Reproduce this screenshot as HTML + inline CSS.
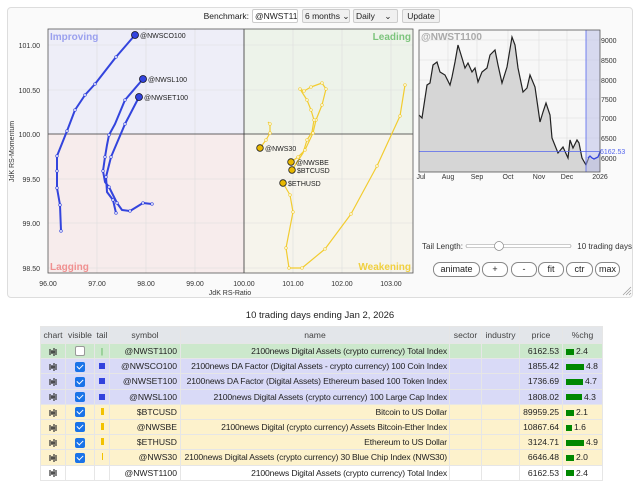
<!DOCTYPE html>
<html><head><meta charset="utf-8"><style>
*{box-sizing:border-box;margin:0;padding:0}
body{width:640px;height:484px;background:#fff;font-family:"Liberation Sans",Arial,sans-serif;position:relative;overflow:hidden;color:#222}
.abs{position:absolute}
#panel{left:7px;top:7px;width:626px;height:291px;border:1px solid #ddd;border-radius:4px;background:#fafafa}
.ctl{position:absolute;height:14px;top:9px;border:1px solid #ccc;border-radius:2px;background:#f0f0f0;font-size:8.5px;line-height:12px;padding-left:2px;overflow:hidden;white-space:nowrap}
.btn{position:absolute;top:262px;height:15px;border:1px solid #888;border-radius:7px;background:#fff;font-size:9px;line-height:13px;text-align:center}
table{position:absolute;left:40px;top:326px;width:562px;border-collapse:collapse;font-size:8.6px;table-layout:fixed}
td,th{border:1px solid #e6e6e6;height:15.2px;padding:0 3px;white-space:nowrap;overflow:hidden}
th{background:#e3e6ea;font-weight:normal;color:#444;height:17px;padding:0}
.g td{background:#cce8cc}.b td{background:#d9daf7}.y td{background:#fdf2cc}
.r{text-align:right}.c{text-align:center;padding:0}
.n{letter-spacing:-0.15px;padding-right:2px}
.cb{display:inline-block;width:10px;height:10px;border-radius:2px;background:#1a73e8;vertical-align:middle;position:relative}
.cb:after{content:"";position:absolute;left:3px;top:1px;width:3px;height:5px;border:solid #fff;border-width:0 1.5px 1.5px 0;transform:rotate(45deg)}
.bar{display:inline-block;height:6px;background:#080;vertical-align:middle;margin-right:2px}
.ic{vertical-align:middle}
</style></head><body>
<div id="panel" class="abs"></div>
<div class="abs" style="left:196px;width:53px;text-align:right;top:11px;font-size:8.5px">Benchmark:</div>
<div class="ctl" style="left:252px;width:46px;background:#fff">@NWST1100</div>
<div class="ctl" style="left:302px;width:48px">6 months ⌄</div>
<div class="ctl" style="left:353px;width:45px">Daily&nbsp;&nbsp;&nbsp;&nbsp;⌄</div>
<div class="ctl" style="left:402px;width:38px;text-align:center;padding:0">Update</div>

<svg class="abs" style="left:0;top:0" width="640" height="300" font-family="Liberation Sans,Arial,sans-serif">
<rect x="48" y="29" width="196" height="105" fill="#eeeef8"/>
<rect x="244" y="29" width="169" height="105" fill="#edf3ea"/>
<rect x="48" y="134" width="196" height="139" fill="#f7ecec"/>
<rect x="244" y="134" width="169" height="139" fill="#f6f4ec"/>
<g stroke="#ddd" stroke-width="0.6">
<line x1="97" y1="29" x2="97" y2="273"/><line x1="146" y1="29" x2="146" y2="273"/><line x1="195" y1="29" x2="195" y2="273"/><line x1="293" y1="29" x2="293" y2="273"/><line x1="342" y1="29" x2="342" y2="273"/><line x1="391" y1="29" x2="391" y2="273"/>
<line x1="48" y1="45" x2="413" y2="45"/><line x1="48" y1="90" x2="413" y2="90"/><line x1="48" y1="179" x2="413" y2="179"/><line x1="48" y1="223" x2="413" y2="223"/><line x1="48" y1="268" x2="413" y2="268"/>
</g>
<line x1="244" y1="29" x2="244" y2="273" stroke="#333" stroke-width="0.8"/>
<line x1="48" y1="134" x2="413" y2="134" stroke="#333" stroke-width="0.8"/>
<rect x="48" y="29" width="365" height="244" fill="none" stroke="#555" stroke-width="0.8"/>
<g font-size="10" font-weight="bold">
<text x="50" y="40" fill="#9aa0ee">Improving</text>
<text x="411" y="40" fill="#7cc47c" text-anchor="end">Leading</text>
<text x="50" y="270" fill="#f09090">Lagging</text>
<text x="411" y="270" fill="#f0d040" text-anchor="end">Weakening</text>
</g>
<g font-size="7" fill="#333" text-anchor="end">
<text x="40" y="48">101.00</text><text x="40" y="93">100.50</text><text x="40" y="137">100.00</text><text x="40" y="182">99.50</text><text x="40" y="226">99.00</text><text x="40" y="271">98.50</text>
</g>
<g font-size="7" fill="#333" text-anchor="middle">
<text x="48" y="286">96.00</text><text x="97" y="286">97.00</text><text x="146" y="286">98.00</text><text x="195" y="286">99.00</text><text x="244" y="286">100.00</text><text x="293" y="286">101.00</text><text x="342" y="286">102.00</text><text x="391" y="286">103.00</text>
<text x="230" y="295">JdK RS-Ratio</text>
</g>
<text x="0" y="0" font-size="7" fill="#333" transform="translate(14,182) rotate(-90)">JdK RS-Momentum</text>
<g fill="none" stroke="#3344dd" stroke-width="2" stroke-linejoin="round">
<polyline points="135,35 116,57 95,84 85,95 75,110 67,131 57,156 57,171 57,188 60,205 61,231"/>
<polyline points="143,79 125,100 115,124 109,135 107,145 105,157 103,171 105,182 109,187 117,203 122,210 130,211 143,203 152,204"/>
<polyline points="139,97 125,124 111,157 106,177 107,192 113,200 116,213"/>
</g>
<g fill="#fff" stroke="#3344dd" stroke-width="0.7">
<circle cx="116" cy="57" r="1.3"/><circle cx="95" cy="84" r="1.3"/><circle cx="85" cy="95" r="1.3"/><circle cx="75" cy="110" r="1.3"/><circle cx="67" cy="131" r="1.3"/><circle cx="57" cy="156" r="1.3"/><circle cx="57" cy="171" r="1.3"/><circle cx="57" cy="188" r="1.3"/><circle cx="60" cy="205" r="1.3"/><circle cx="61" cy="231" r="1.3"/>
<circle cx="125" cy="100" r="1.3"/><circle cx="109" cy="135" r="1.3"/><circle cx="105" cy="157" r="1.3"/><circle cx="103" cy="171" r="1.3"/><circle cx="109" cy="187" r="1.3"/><circle cx="117" cy="203" r="1.3"/><circle cx="130" cy="211" r="1.3"/><circle cx="143" cy="203" r="1.3"/><circle cx="152" cy="204" r="1.3"/>
<circle cx="125" cy="124" r="1.3"/><circle cx="111" cy="157" r="1.3"/><circle cx="106" cy="177" r="1.3"/><circle cx="113" cy="200" r="1.3"/><circle cx="116" cy="213" r="1.3"/>
</g>
<g fill="#3344dd" stroke="#112" stroke-width="0.8">
<circle cx="135" cy="35" r="3.5"/><circle cx="143" cy="79" r="3.5"/><circle cx="139" cy="97" r="3.5"/>
</g>
<g fill="none" stroke="#f2cc30" stroke-width="1.2" stroke-linejoin="round">
<polyline points="260,148 266,140 270,133 270,124 268,122"/>
<polyline points="291,162 298,157 305,150 313,133 316,120 322,105 326,89 322,83 311,87 304,91 300,89 307,100 311,110 314,120 312,132 307,140 303,153 292,170"/>
<polyline points="283,183 290,195 293,212 286,248 289,268 302,268 325,249 351,214 377,166 400,116 405,85"/>
</g>
<g fill="#fff" stroke="#f2cc30" stroke-width="0.7">
<circle cx="266" cy="140" r="1.3"/><circle cx="270" cy="133" r="1.3"/><circle cx="270" cy="124" r="1.3"/>
<circle cx="298" cy="157" r="1.3"/><circle cx="305" cy="150" r="1.3"/><circle cx="313" cy="133" r="1.3"/><circle cx="316" cy="120" r="1.3"/><circle cx="322" cy="105" r="1.3"/><circle cx="326" cy="89" r="1.3"/><circle cx="322" cy="83" r="1.3"/><circle cx="311" cy="87" r="1.3"/><circle cx="304" cy="91" r="1.3"/><circle cx="300" cy="89" r="1.3"/><circle cx="307" cy="100" r="1.3"/><circle cx="311" cy="110" r="1.3"/><circle cx="314" cy="120" r="1.3"/><circle cx="307" cy="140" r="1.3"/>
<circle cx="290" cy="195" r="1.3"/><circle cx="293" cy="212" r="1.3"/><circle cx="286" cy="248" r="1.3"/><circle cx="289" cy="268" r="1.3"/><circle cx="302" cy="268" r="1.3"/><circle cx="325" cy="249" r="1.3"/><circle cx="351" cy="214" r="1.3"/><circle cx="377" cy="166" r="1.3"/><circle cx="400" cy="116" r="1.3"/><circle cx="405" cy="85" r="1.3"/>
</g>
<g fill="#e8b800" stroke="#222" stroke-width="0.8">
<circle cx="260" cy="148" r="3.3"/><circle cx="291" cy="162" r="3.3"/><circle cx="292" cy="170" r="3.3"/><circle cx="283" cy="183" r="3.3"/>
</g>
<g font-size="7" fill="#222">
<text x="140" y="38">@NWSCO100</text><text x="148" y="82">@NWSL100</text><text x="144" y="100">@NWSET100</text>
<text x="265" y="151">@NWS30</text><text x="296" y="165">@NWSBE</text><text x="297" y="173">$BTCUSD</text><text x="288" y="186">$ETHUSD</text>
</g>

<rect x="419" y="30" width="181" height="142" fill="#f7f7f7"/>
<g stroke="#ddd" stroke-width="0.6">
<line x1="448" y1="30" x2="448" y2="172"/><line x1="477" y1="30" x2="477" y2="172"/><line x1="508" y1="30" x2="508" y2="172"/><line x1="539" y1="30" x2="539" y2="172"/><line x1="567" y1="30" x2="567" y2="172"/>
<line x1="419" y1="40" x2="600" y2="40"/><line x1="419" y1="60" x2="600" y2="60"/><line x1="419" y1="80" x2="600" y2="80"/><line x1="419" y1="99" x2="600" y2="99"/><line x1="419" y1="118" x2="600" y2="118"/><line x1="419" y1="138" x2="600" y2="138"/><line x1="419" y1="158" x2="600" y2="158"/>
</g>
<polygon fill="#d6d6d6" points="419,115 422,118 427,85 430,83 433,65 437,62 440,72 445,75 450,85 452,77 455,62 458,45 462,58 465,68 468,63 472,72 475,68 478,82 482,72 487,68 490,55 495,50 498,65 502,83 507,67 512,37 515,45 518,68 523,92 527,88 530,75 535,87 540,122 543,112 546,103 550,115 552,138 558,153 563,147 568,158 570,140 573,148 577,140 579,143 582,158 586,165 589,157 592,160 598,157 600,152 600,172 419,172"/>
<polyline fill="none" stroke="#222" stroke-width="1.2" points="419,115 422,118 427,85 430,83 433,65 437,62 440,72 445,75 450,85 452,77 455,62 458,45 462,58 465,68 468,63 472,72 475,68 478,82 482,72 487,68 490,55 495,50 498,65 502,83 507,67 512,37 515,45 518,68 523,92 527,88 530,75 535,87 540,122 543,112 546,103 550,115 552,138 558,153 563,147 568,158 570,140 573,148 577,140 579,143 582,158 586,165 589,157"/>
<rect x="586" y="30" width="14" height="142" fill="#b8bce8" opacity="0.5"/>
<polyline fill="none" stroke="#3344dd" stroke-width="1.3" points="588,158 590,156 592,158 594,159 596,158 598,157 600,152"/>
<line x1="586" y1="30" x2="586" y2="172" stroke="#5566ee" stroke-width="0.8"/>
<line x1="419" y1="151.5" x2="600" y2="151.5" stroke="#5566ee" stroke-width="0.8"/>
<rect x="419" y="30" width="181" height="142" fill="none" stroke="#555" stroke-width="0.8"/>
<text x="421" y="40" font-size="10" font-weight="bold" fill="#aaa">@NWST1100</text>
<g font-size="7" fill="#333">
<text x="601" y="43">9000</text><text x="601" y="63">8500</text><text x="601" y="83">8000</text><text x="601" y="102">7500</text><text x="601" y="121">7000</text><text x="601" y="141">6500</text><text x="601" y="161">6000</text>
<text x="600" y="154" fill="#5566ee">6162.53</text>
</g>
<g font-size="7" fill="#333" text-anchor="middle">
<text x="421" y="179">Jul</text><text x="448" y="179">Aug</text><text x="477" y="179">Sep</text><text x="508" y="179">Oct</text><text x="539" y="179">Nov</text><text x="567" y="179">Dec</text><text x="600" y="179">2026</text>
</g>
<text x="422" y="249" font-size="8" fill="#333">Tail Length:</text>
<rect x="466" y="244.5" width="105" height="3" rx="1.5" fill="#fff" stroke="#999" stroke-width="0.6"/>
<circle cx="499" cy="246" r="4.5" fill="#fff" stroke="#888" stroke-width="0.7"/>
<text x="632" y="249" font-size="8" fill="#333" text-anchor="end">10 trading days</text>
<g stroke="#999" stroke-width="0.7"><line x1="623" y1="295" x2="631" y2="287"/><line x1="626" y1="295" x2="631" y2="290"/><line x1="629" y1="295" x2="631" y2="293"/></g>
</svg>
<div class="btn" style="left:433px;width:47px">animate</div>
<div class="btn" style="left:482px;width:26px">+</div>
<div class="btn" style="left:511px;width:26px">-</div>
<div class="btn" style="left:538px;width:26px">fit</div>
<div class="btn" style="left:566px;width:27px">ctr</div>
<div class="btn" style="left:595px;width:25px">max</div>

<div class="abs" style="left:0;width:640px;top:310px;text-align:center;font-size:9.5px">10 trading days ending Jan 2, 2026</div>
<table>
<colgroup><col style="width:25px"><col style="width:29px"><col style="width:15px"><col style="width:71px"><col style="width:269px"><col style="width:32px"><col style="width:38px"><col style="width:43px"><col style="width:40px"></colgroup>
<tr><th>chart</th><th>visible</th><th>tail</th><th>symbol</th><th>name</th><th>sector</th><th>industry</th><th>price</th><th>%chg</th></tr>
<tr class="g"><td class="c"><svg class="ic" width="9" height="8"><path d="M1 1V7M3 2V6M5 0V8M7 1V7M2 4H6" stroke="#333" stroke-width="1.2"/></svg></td><td class="c"><span style="display:inline-block;width:10px;height:10px;background:#fff;border:1px solid #999;border-radius:2px;vertical-align:middle"></span></td><td class="c" style="color:#4a4">|</td><td class="r">@NWST1100</td><td class="r n">2100news Digital Assets (crypto currency) Total Index</td><td></td><td></td><td class="r">6162.53</td><td><span class="bar" style="width:8px"></span>2.4</td></tr>
<tr class="b"><td class="c"><svg class="ic" width="9" height="8"><path d="M1 1V7M3 2V6M5 0V8M7 1V7M2 4H6" stroke="#333" stroke-width="1.2"/></svg></td><td class="c"><span class="cb"></span></td><td class="c"><span style="display:inline-block;width:6px;height:6px;background:#3344dd"></span></td><td class="r">@NWSCO100</td><td class="r n">2100news DA Factor (Digital Assets - crypto currency) 100 Coin Index</td><td></td><td></td><td class="r">1855.42</td><td><span class="bar" style="width:18px"></span>4.8</td></tr>
<tr class="b"><td class="c"><svg class="ic" width="9" height="8"><path d="M1 1V7M3 2V6M5 0V8M7 1V7M2 4H6" stroke="#333" stroke-width="1.2"/></svg></td><td class="c"><span class="cb"></span></td><td class="c"><span style="display:inline-block;width:6px;height:6px;background:#3344dd"></span></td><td class="r">@NWSET100</td><td class="r n">2100news DA Factor (Digital Assets) Ethereum based 100 Token Index</td><td></td><td></td><td class="r">1736.69</td><td><span class="bar" style="width:17px"></span>4.7</td></tr>
<tr class="b"><td class="c"><svg class="ic" width="9" height="8"><path d="M1 1V7M3 2V6M5 0V8M7 1V7M2 4H6" stroke="#333" stroke-width="1.2"/></svg></td><td class="c"><span class="cb"></span></td><td class="c"><span style="display:inline-block;width:6px;height:6px;background:#3344dd"></span></td><td class="r">@NWSL100</td><td class="r n">2100news Digital Assets (crypto currency) 100 Large Cap Index</td><td></td><td></td><td class="r">1808.02</td><td><span class="bar" style="width:16px"></span>4.3</td></tr>
<tr class="y"><td class="c"><svg class="ic" width="9" height="8"><path d="M1 1V7M3 2V6M5 0V8M7 1V7M2 4H6" stroke="#333" stroke-width="1.2"/></svg></td><td class="c"><span class="cb"></span></td><td class="c"><span style="display:inline-block;width:3px;height:7px;background:#f2c200"></span></td><td class="r">$BTCUSD</td><td class="r n">Bitcoin to US Dollar</td><td></td><td></td><td class="r">89959.25</td><td><span class="bar" style="width:8px"></span>2.1</td></tr>
<tr class="y"><td class="c"><svg class="ic" width="9" height="8"><path d="M1 1V7M3 2V6M5 0V8M7 1V7M2 4H6" stroke="#333" stroke-width="1.2"/></svg></td><td class="c"><span class="cb"></span></td><td class="c"><span style="display:inline-block;width:3px;height:7px;background:#f2c200"></span></td><td class="r">@NWSBE</td><td class="r n">2100news Digital (crypto currency) Assets Bitcoin-Ether Index</td><td></td><td></td><td class="r">10867.64</td><td><span class="bar" style="width:6px"></span>1.6</td></tr>
<tr class="y"><td class="c"><svg class="ic" width="9" height="8"><path d="M1 1V7M3 2V6M5 0V8M7 1V7M2 4H6" stroke="#333" stroke-width="1.2"/></svg></td><td class="c"><span class="cb"></span></td><td class="c"><span style="display:inline-block;width:3px;height:7px;background:#f2c200"></span></td><td class="r">$ETHUSD</td><td class="r n">Ethereum to US Dollar</td><td></td><td></td><td class="r">3124.71</td><td><span class="bar" style="width:18px"></span>4.9</td></tr>
<tr class="y"><td class="c"><svg class="ic" width="9" height="8"><path d="M1 1V7M3 2V6M5 0V8M7 1V7M2 4H6" stroke="#333" stroke-width="1.2"/></svg></td><td class="c"><span class="cb"></span></td><td class="c"><span style="display:inline-block;width:1px;height:7px;background:#f2c200"></span></td><td class="r">@NWS30</td><td class="r n">2100news Digital Assets (crypto currency) 30 Blue Chip Index (NWS30)</td><td></td><td></td><td class="r">6646.48</td><td><span class="bar" style="width:8px"></span>2.0</td></tr>
<tr><td class="c"><svg class="ic" width="9" height="8"><path d="M1 1V7M3 2V6M5 0V8M7 1V7M2 4H6" stroke="#333" stroke-width="1.2"/></svg></td><td></td><td></td><td class="r">@NWST1100</td><td class="r n">2100news Digital Assets (crypto currency) Total Index</td><td></td><td></td><td class="r">6162.53</td><td><span class="bar" style="width:8px"></span>2.4</td></tr>
</table>
</body></html>
